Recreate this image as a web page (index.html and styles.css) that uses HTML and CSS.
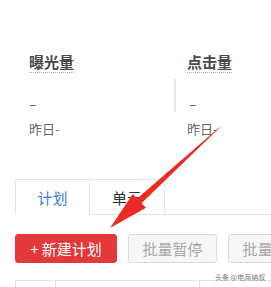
FILE: index.html
```html
<!DOCTYPE html>
<html lang="zh">
<head>
<meta charset="utf-8">
<link rel="stylesheet" href="styles.css">
</head>
<body>
<div class="page">
  <div class="stats">
    <div class="stat stat-first">
      <div class="stat-title">曝光量</div>
      <div class="stat-value">–</div>
      <div class="stat-sub">昨日-</div>
    </div>
    <div class="stat stat-second">
      <div class="stat-title">点击量</div>
      <div class="stat-value">–</div>
      <div class="stat-sub">昨日-</div>
    </div>
  </div>

  <div class="tabs">
    <div class="tab tab-active">计划</div>
    <div class="tab">单元</div>
    <div class="tab-rest"></div>
  </div>

  <div class="actions">
    <button class="btn btn-primary">+ 新建计划</button>
    <button class="btn btn-disabled">批量暂停</button>
    <button class="btn btn-disabled">批量启用</button>
  </div>

  <div class="table-head">
    <div class="th th-check"></div>
    <div class="th th-name"></div>
    <div class="th th-rest"></div>
  </div>

  <div class="watermark">头条 @电商纳叔</div>

  <svg class="arrow" width="271" height="287" viewBox="0 0 271 287">
    <polygon fill="#ea2a23" points="220.6,126.8 219.4,127.2 137.2,198.5 132.8,194 110,228 146,207.8 141.5,203.2"/>
  </svg>
</div>
</body>
</html>
```
FILE: styles.css
```css
* { box-sizing: border-box; }
html, body { margin: 0; padding: 0; background: #fff; }
body {
  font-family: "Noto Sans CJK SC", "Noto Sans", sans-serif;
  color: #333;
  width: 271px;
  height: 287px;
  overflow: hidden;
}
.page { position: relative; width: 271px; height: 287px; overflow: hidden; }

.stats {
  display: flex;
  padding: 52px 0 0 29px;
}
.stat { display: flex; flex-direction: column; align-items: flex-start; }
.stat-first { width: 158px; }
.stat-title {
  font-size: 15px;
  font-weight: bold;
  line-height: 20px;
  color: #4a4a4a;
  border-bottom: 1px dotted #aaa;
}
.stat-value {
  margin-top: 6px;
  height: 33px;
  padding-top: 15px;
  font-size: 13px;
  line-height: 20px;
  color: #555;
}
.stat-second .stat-value {
  border-left: 2px solid #e8e8e8;
  margin-left: -13px;
  padding-left: 13px;
}
.stat-sub {
  margin-top: 7px;
  font-size: 13px;
  line-height: 20px;
  color: #666;
}

.tabs {
  display: flex;
  margin: 40px 0 0 15px;
  height: 36px;
}
.tab {
  width: 75px;
  height: 36px;
  border: 1px solid #e5e5e5;
  border-left: none;
  display: flex;
  align-items: center;
  justify-content: center;
  font-size: 15px;
  color: #333;
}
.tab:first-child { border-left: 1px solid #e5e5e5; }
.tab-active { border-bottom-color: #fff; color: #3b7fd4; }
.tab-rest { flex: 1; border-bottom: 1px solid #e5e5e5; }

.actions {
  display: flex;
  gap: 11px;
  margin: 19px 0 0 15px;
  overflow: hidden;
}
.btn {
  height: 29px;
  border-radius: 3px;
  font-family: "Noto Sans CJK SC", sans-serif;
  font-size: 15px;
  line-height: 27px;
  padding: 0;
  flex: none;
}
.btn-primary {
  width: 102px;
  background: #e4383b;
  border: 1px solid #e4383b;
  color: #fff;
}
.btn-disabled {
  width: 89px;
  background: #f6f6f6;
  border: 1px solid #dcdcdc;
  color: #a8a8a8;
}

.table-head {
  display: flex;
  margin: 17px 0 0 15px;
  height: 20px;
  border-top: 1px solid #e3e3e3;
}
.th { border-left: 1px solid #e3e3e3; }
.th-check { width: 40px; }
.th-name { width: 144px; }
.th-rest { flex: 1; }

.watermark {
  position: absolute;
  left: 215px;
  top: 272px;
  font-size: 7px;
  line-height: 10px;
  color: #777;
  white-space: nowrap;
}
.arrow { position: absolute; left: 0; top: 0; pointer-events: none; }
```
